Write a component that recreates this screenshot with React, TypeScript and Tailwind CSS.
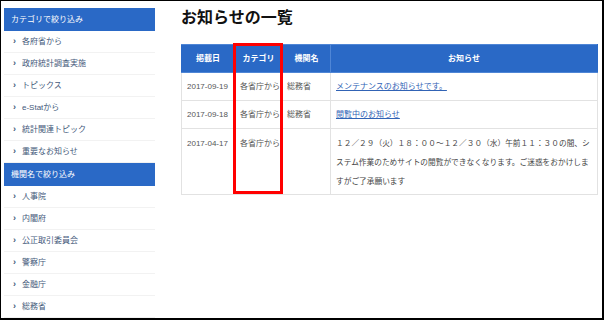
import React from 'react';

const categories = ['各府省から', '政府統計調査実施', 'トピックス', 'e-Statから', '統計関連トピック', '重要なお知らせ'];
const agencies = ['人事院', '内閣府', '公正取引委員会', '警察庁', '金融庁', '総務省'];

const font = { fontFamily: '"Liberation Sans", "Noto Sans CJK JP", sans-serif' };

function SideGroup({ title, items }: { title: string; items: string[] }) {
  return (
    <div>
      <div className="h-[23px] flex items-center pl-[7px] bg-[#2a69c6] text-white text-[8px]">{title}</div>
      {items.map((item) => (
        <div key={item} className="h-[22px] flex items-center border-b border-[#f2f2f2] text-[8px] text-[#44597a]">
          <span className="w-[18px] pl-[9px] text-[9px] font-bold">›</span>
          <span>{item}</span>
        </div>
      ))}
    </div>
  );
}

const rows = [
  { date: '2017-09-19', cat: '各省庁から', org: '総務省', link: 'メンテナンスのお知らせです。' },
  { date: '2017-09-18', cat: '各省庁から', org: '総務省', link: '閲覧中のお知らせ' },
];

export default function App() {
  return (
    <div className="w-[604px] h-[320px] bg-white border-t border-l border-r-2 border-b-2 border-black overflow-hidden flex" style={font}>
      <div className="w-[151px] ml-[3px] mt-[7px] shrink-0">
        <SideGroup title="カテゴリで絞り込み" items={categories} />
        <SideGroup title="機関名で絞り込み" items={agencies} />
      </div>
      <div className="ml-[26px] w-[417px]">
        <h1 className="mt-[4px] h-[26px] text-[16px] font-bold text-[#111] leading-[26px]">お知らせの一覧</h1>
        <div className="relative mt-[13px]">
          <table className="w-[417px] border-collapse text-[8px] text-[#555] table-fixed">
            <colgroup>
              <col className="w-[53px]" />
              <col className="w-[48px]" />
              <col className="w-[48px]" />
              <col />
            </colgroup>
            <thead>
              <tr className="h-[28px] bg-[#2a69c6] text-white font-bold">
                <th className="border border-[#4f86d6] border-l-[#2a69c6]">掲載日</th>
                <th className="border border-[#4f86d6]">カテゴリ</th>
                <th className="border border-[#4f86d6]">機関名</th>
                <th className="border border-[#4f86d6] border-r-[#2a69c6]">お知らせ</th>
              </tr>
            </thead>
            <tbody>
              {rows.map((r) => (
                <tr key={r.date} className="h-[28px]">
                  <td className="border border-[#e2e2e2] pl-[5px] whitespace-nowrap">{r.date}</td>
                  <td className="border border-[#e2e2e2] pl-[5px] whitespace-nowrap">{r.cat}</td>
                  <td className="border border-[#e2e2e2] pl-[4px]">{r.org}</td>
                  <td className="border border-[#e2e2e2] pl-[5px]">
                    <a className="text-[#3163b5] underline">{r.link}</a>
                  </td>
                </tr>
              ))}
              <tr className="h-[63px] align-top">
                <td className="border border-[#e2e2e2] pl-[5px] pt-[9px] whitespace-nowrap">2017-04-17</td>
                <td className="border border-[#e2e2e2] pl-[5px] pt-[9px] whitespace-nowrap">各省庁から</td>
                <td className="border border-[#e2e2e2]"></td>
                <td className="border border-[#e2e2e2] pl-[5px] pr-[2px] pt-[5px] pb-[3px] text-[7.7px] leading-[19px] text-[#444]">
                  １２／２９（火）１８：００～１２／３０（水）午前１１：３０の間、システム作業のためサイトの閲覧ができなくなります。ご迷惑をおかけしますがご了承願います
                </td>
              </tr>
            </tbody>
          </table>
          <div className="absolute left-[52px] top-[-1px] w-[50px] h-[151px] border-[3px] border-[#ff0000] pointer-events-none" />
        </div>
      </div>
    </div>
  );
}
